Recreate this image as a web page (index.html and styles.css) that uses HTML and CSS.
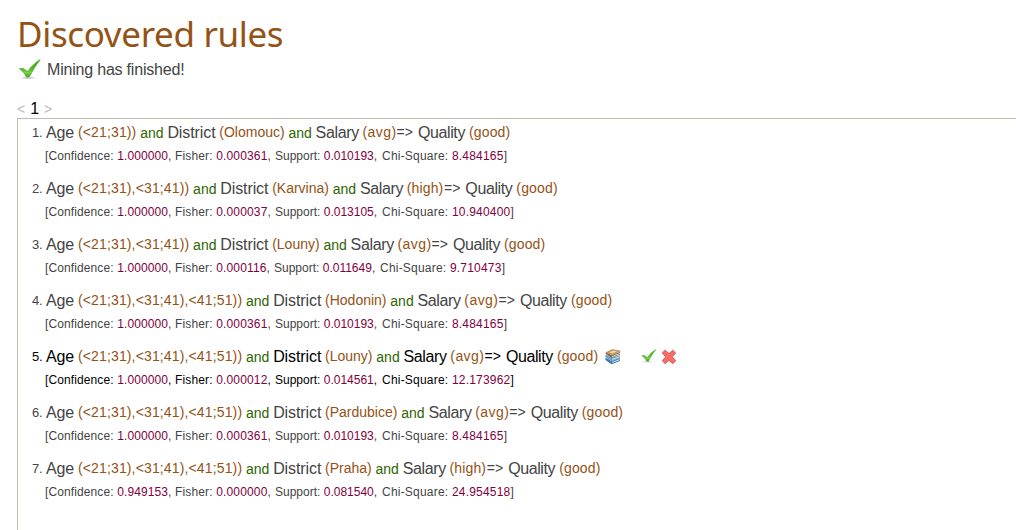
FILE: index.html
```html
<!DOCTYPE html>
<html lang="en">
<head>
<meta charset="utf-8">
<title>Discovered rules</title>
<link rel="stylesheet" href="styles.css">
</head>
<body>
<svg class="defs" width="0" height="0" aria-hidden="true">
  <defs>
    <linearGradient id="green" x1="0" y1="0" x2="0" y2="1"><stop offset="0" stop-color="#35a51b"/><stop offset=".55" stop-color="#55bb22"/><stop offset=".75" stop-color="#7bd245"/><stop offset="1" stop-color="#3aa51c"/></linearGradient>
    <radialGradient id="shade"><stop offset="0" stop-color="#888" stop-opacity=".75"/><stop offset="1" stop-color="#bbb" stop-opacity="0"/></radialGradient>
    <symbol id="check" viewBox="0 0 24 22">
      <ellipse cx="10" cy="18.8" rx="9" ry="1.8" fill="url(#shade)"/>
      <path d="M1.4 9.8 5 9.4 9.7 12.6C12.8 8 17.2 3.6 22.2 .6 18.6 5.4 14.2 12 11.4 17.6L8.4 17.8C6.8 14.6 4.6 12 1.4 9.8Z" fill="url(#green)" stroke="#3aa51c" stroke-width=".7" stroke-linejoin="round"/>
    </symbol>
  </defs>
</svg>
<main class="page">
  <h1 class="title">Discovered rules</h1>
  <div class="status"><svg class="status-icon"><use href="#check"/></svg><span>Mining has finished!</span></div>
  <nav class="pager"><span>&lt;</span><b class="current">1</b><span>&gt;</span></nav>
  <ol class="rules">
    <li class="rule"><div class="line"><span class="num">1.</span><span class="attr age">Age</span><span class="val range">(&lt;21;31))</span><span class="and">and</span><span class="attr">District</span><span class="val">(Olomouc)</span><span class="and">and</span><span class="attr salary">Salary</span><span class="val avg">(avg)</span><span class="arrow">=&gt;</span><span class="attr quality">Quality</span><span class="val good">(good)</span></div>
      <div class="info"><span class="conf">[Confidence: <i>1.000000</i>,</span><span class="fish">Fisher: <i>0.000361</i>,</span><span class="supp">Support: <i>0.010193</i>,</span><span class="chi">Chi-Square: <i>8.484165</i>]</span></div></li>
    <li class="rule"><div class="line"><span class="num">2.</span><span class="attr age">Age</span><span class="val range">(&lt;21;31),&lt;31;41))</span><span class="and">and</span><span class="attr">District</span><span class="val">(Karvina)</span><span class="and">and</span><span class="attr salary">Salary</span><span class="val high">(high)</span><span class="arrow">=&gt;</span><span class="attr quality">Quality</span><span class="val good">(good)</span></div>
      <div class="info"><span class="conf">[Confidence: <i>1.000000</i>,</span><span class="fish">Fisher: <i>0.000037</i>,</span><span class="supp">Support: <i>0.013105</i>,</span><span class="chi">Chi-Square: <i>10.940400</i>]</span></div></li>
    <li class="rule"><div class="line"><span class="num">3.</span><span class="attr age">Age</span><span class="val range">(&lt;21;31),&lt;31;41))</span><span class="and">and</span><span class="attr">District</span><span class="val">(Louny)</span><span class="and">and</span><span class="attr salary">Salary</span><span class="val avg">(avg)</span><span class="arrow">=&gt;</span><span class="attr quality">Quality</span><span class="val good">(good)</span></div>
      <div class="info tight"><span class="conf">[Confidence: <i>1.000000</i>,</span><span class="fish">Fisher: <i>0.000116</i>,</span><span class="supp">Support: <i>0.011649</i>,</span><span class="chi">Chi-Square: <i>9.710473</i>]</span></div></li>
    <li class="rule"><div class="line"><span class="num">4.</span><span class="attr age">Age</span><span class="val range">(&lt;21;31),&lt;31;41),&lt;41;51))</span><span class="and">and</span><span class="attr">District</span><span class="val">(Hodonin)</span><span class="and">and</span><span class="attr salary">Salary</span><span class="val avg">(avg)</span><span class="arrow">=&gt;</span><span class="attr quality">Quality</span><span class="val good">(good)</span></div>
      <div class="info"><span class="conf">[Confidence: <i>1.000000</i>,</span><span class="fish">Fisher: <i>0.000361</i>,</span><span class="supp">Support: <i>0.010193</i>,</span><span class="chi">Chi-Square: <i>8.484165</i>]</span></div></li>
    <li class="rule active"><div class="line"><span class="num">5.</span><span class="attr age">Age</span><span class="val range">(&lt;21;31),&lt;31;41),&lt;41;51))</span><span class="and">and</span><span class="attr">District</span><span class="val">(Louny)</span><span class="and">and</span><span class="attr salary">Salary</span><span class="val avg">(avg)</span><span class="arrow">=&gt;</span><span class="attr quality">Quality</span><span class="val good">(good)</span>
        <span class="tools">
          <svg class="books" viewBox="0 0 16 16">
            <path d="M.5 11 6.5 15.2 15 12V9L6.5 12 .5 8.5Z" fill="#3f7aa8"/><path d="M7 13.4 14.8 10.6" fill="none" stroke="#e8f0f5" stroke-width=".9"/>
            <path d="M.5 8 6.5 11.9 15 8.8V6.2L6.5 9 .5 5.6Z" fill="#5f9fcb"/><path d="M7 10.5 14.8 7.7" fill="none" stroke="#dce9f2" stroke-width=".9"/>
            <path d="M.8 5.1 6.6 8.9 15 5.5V3L6.6 6.3 .8 3.3Z" fill="#80664c"/><path d="M7 7.6 14.8 4.6" fill="none" stroke="#edf1ee" stroke-width=".8"/>
            <path d="M.9 3.6 7.4.5 15.3 2 6.9 6Z" fill="#dc9150" stroke="#b0733c" stroke-width=".5"/><path d="M4.3 3.3 8.2 1.4 12 2.2 7.6 4.4Z" fill="#b4ebcb"/>
          </svg>
          <svg class="accept"><use href="#check"/></svg>
          <svg class="reject" viewBox="0 0 16 16"><path d="M1.2 4 4.2 1.2 8 4.6 11.7 1.2 14.7 4 11.2 7.8 14.7 11.8 11.8 14.7 8 11.2 4.3 14.7 1.3 11.8 4.8 7.8Z" fill="#f46d68" stroke="#e05552" stroke-linejoin="round"/></svg>
        </span></div>
      <div class="info"><span class="conf">[Confidence: <i>1.000000</i>,</span><span class="fish">Fisher: <i>0.000012</i>,</span><span class="supp">Support: <i>0.014561</i>,</span><span class="chi">Chi-Square: <i>12.173962</i>]</span></div></li>
    <li class="rule"><div class="line"><span class="num">6.</span><span class="attr age">Age</span><span class="val range">(&lt;21;31),&lt;31;41),&lt;41;51))</span><span class="and">and</span><span class="attr">District</span><span class="val">(Pardubice)</span><span class="and">and</span><span class="attr salary">Salary</span><span class="val avg">(avg)</span><span class="arrow">=&gt;</span><span class="attr quality">Quality</span><span class="val good">(good)</span></div>
      <div class="info"><span class="conf">[Confidence: <i>1.000000</i>,</span><span class="fish">Fisher: <i>0.000361</i>,</span><span class="supp">Support: <i>0.010193</i>,</span><span class="chi">Chi-Square: <i>8.484165</i>]</span></div></li>
    <li class="rule"><div class="line"><span class="num">7.</span><span class="attr age">Age</span><span class="val range">(&lt;21;31),&lt;31;41),&lt;41;51))</span><span class="and">and</span><span class="attr">District</span><span class="val">(Praha)</span><span class="and">and</span><span class="attr salary">Salary</span><span class="val high">(high)</span><span class="arrow">=&gt;</span><span class="attr quality">Quality</span><span class="val good">(good)</span></div>
      <div class="info"><span class="conf">[Confidence: <i>0.949153</i>,</span><span class="fish">Fisher: <i>0.000000</i>,</span><span class="supp">Support: <i>0.081540</i>,</span><span class="chi">Chi-Square: <i>24.954518</i>]</span></div></li>
  </ol>
</main>
</body>
</html>
```
FILE: styles.css
```css
* { box-sizing: border-box; }
body { margin: 0; height: 530px; overflow: hidden; background: #fff; color: #444; font-family: "Liberation Sans", Arial, sans-serif; font-size: 16px; }
.defs { display: block; }
.page { display: flex; flex-direction: column; height: 530px; padding: 10px 0 0 17px; }
.title { margin: 0; height: 47px; font: 400 35px/48px "Noto Sans", "Open Sans", sans-serif; color: #945215; letter-spacing: -0.35px; }
.status { display: flex; align-items: center; gap: 5px; height: 25px; padding-left: 1px; letter-spacing: -0.2px; }
.status-icon { width: 24px; height: 22px; }
.pager { display: flex; align-items: center; gap: 5px; height: 20px; margin-top: 16px; padding-top: 1px; color: #bbb; font-size: 14px; }
.current { font-weight: 400; font-size: 16px; line-height: 20px; color: #000; }
.rules { flex: 1; margin: 0; padding: 0 0 0 14px; list-style: none; border: solid #bdbdb0; border-width: 1px 0 0 1px; overflow: hidden; }
.rule { height: 56px; }
.line { display: flex; align-items: flex-start; height: 27px; line-height: 27px; white-space: nowrap; }
.num { width: 14px; font-size: 13px; letter-spacing: -0.3px; }
.attr { margin-right: 3.8px; letter-spacing: -0.1px; }
.salary { width: 43px; letter-spacing: -0.35px; }
.quality { width: 47px; margin-right: 4px; letter-spacing: -0.4px; }
.val { margin-right: 3.8px; font-size: 14px; color: #945215; }
.val.range { letter-spacing: 0.14px; }
.val.avg { margin-right: 0; letter-spacing: 0.45px; }
.val.high { margin-right: 0.5px; letter-spacing: 0.15px; }
.val.good { letter-spacing: 0.15px; }
.and { margin-right: 3.8px; font-size: 14px; line-height: 29px; color: #2d6400; }
.arrow { margin-right: 4.9px; font-size: 14px; letter-spacing: 0.1px; }
.info { display: flex; height: 20px; padding-left: 13px; line-height: 20px; font-size: 12px; white-space: nowrap; }
.info i { font-style: normal; color: #800040; }
.conf { width: 130px; letter-spacing: 0.11px; }
.fish { width: 100px; letter-spacing: 0.15px; }
.supp { width: 107px; }
.tight .fish { width: 99px; }
.tight .supp { width: 106px; }
.chi { letter-spacing: 0.21px; }
.active { color: #000; }
.tools { display: flex; align-items: center; align-self: center; margin-left: 3px; }
.books { width: 16px; height: 16px; }
.accept { width: 16px; height: 15px; margin-left: 20px; }
.reject { width: 16px; height: 16px; margin-left: 4px; }
```
